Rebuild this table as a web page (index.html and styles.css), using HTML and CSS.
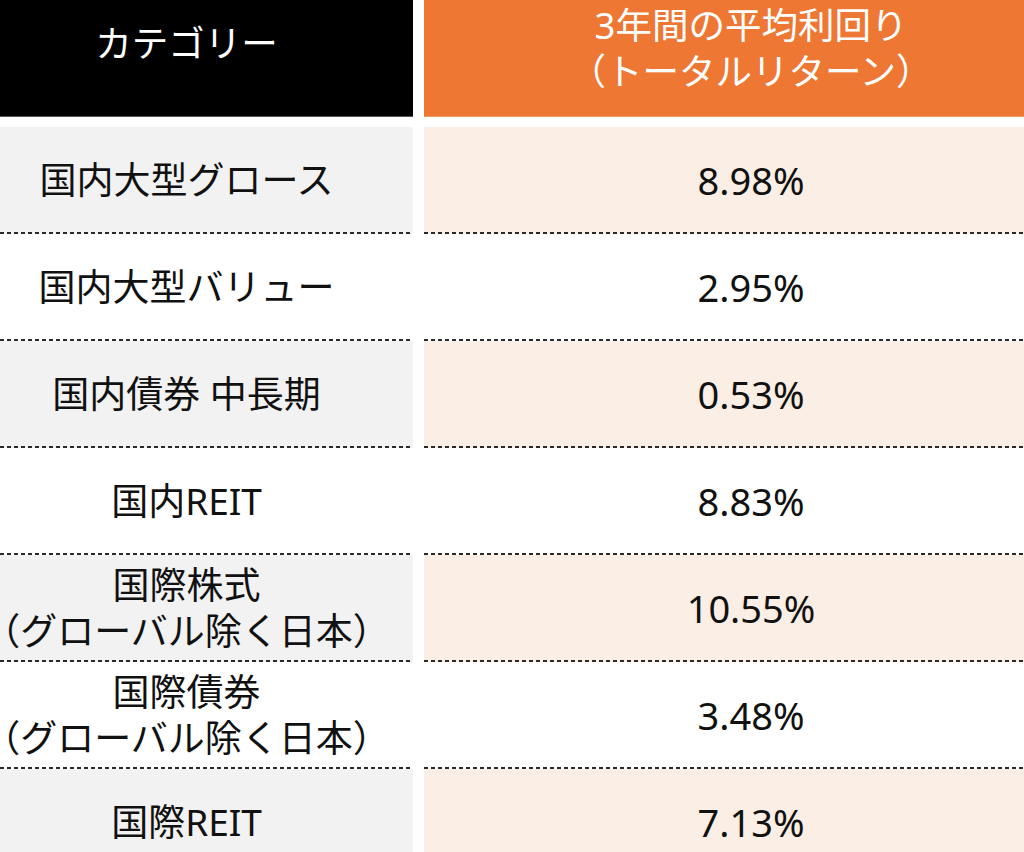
FILE: index.html
```html
<!DOCTYPE html>
<html lang="ja">
<head>
<meta charset="utf-8">
<link rel="stylesheet" href="styles.css">
</head>
<body>
<div class="table">
  <div class="head">
    <div class="hcell cat"><span>カテゴリー</span></div>
    <div class="hcell ret"><span>3年間の平均利回り<br>（トータルリターン）</span></div>
  </div>
  <div class="rows">
    <div class="row shade"><div class="cell left">国内大型グロース</div><div class="cell right">8.98%</div></div>
    <div class="row"><div class="cell left">国内大型バリュー</div><div class="cell right">2.95%</div></div>
    <div class="row shade"><div class="cell left">国内債券 中長期</div><div class="cell right">0.53%</div></div>
    <div class="row"><div class="cell left">国内REIT</div><div class="cell right">8.83%</div></div>
    <div class="row shade"><div class="cell left">国際株式<br>（グローバル除く日本）</div><div class="cell right">10.55%</div></div>
    <div class="row"><div class="cell left">国際債券<br>（グローバル除く日本）</div><div class="cell right">3.48%</div></div>
    <div class="row shade"><div class="cell left">国際REIT</div><div class="cell right">7.13%</div></div>
  </div>
</div>
</body>
</html>
```
FILE: styles.css
```css
html, body {
  margin: 0;
  padding: 0;
  background: #ffffff;
}
body {
  width: 1024px;
  height: 852px;
  overflow: hidden;
  font-family: "Noto Sans", "Noto Sans CJK JP", sans-serif;
  font-size: 37px;
  line-height: 46px;
  color: #111111;
}
.table {
  display: flex;
  flex-direction: column;
}
.head {
  display: grid;
  grid-template-columns: 413px 600px;
  column-gap: 11px;
  height: 116px;
}
.hcell {
  display: flex;
  align-items: center;
  justify-content: center;
  text-align: center;
  color: #ffffff;
  white-space: nowrap;
  font-size: 36.5px;
}
.cat {
  background: #000000;
  padding-right: 40px;
  padding-bottom: 30px;
  border-bottom: 1px solid #555555;
}
.ret {
  background: #ed7733;
  padding-left: 54px;
  padding-top: 2px;
  padding-bottom: 22px;
  border-bottom: 1px solid #f19a66;
}
.rows {
  margin-top: 11px;
  display: flex;
  flex-direction: column;
}
.row {
  display: grid;
  grid-template-columns: 413px 600px;
  column-gap: 11px;
  height: 107px;
}
.cell {
  display: flex;
  align-items: center;
  justify-content: center;
  text-align: center;
  white-space: nowrap;
  padding-bottom: 2px;
  background: repeating-linear-gradient(90deg, #2a2a2a 0 4px, transparent 4px 7px) left bottom / 100% 2px no-repeat, #ffffff;
}
.left {
  padding-right: 40px;
}
.right {
  padding-left: 54px;
  font-size: 38px;
}
.shade .left {
  background: repeating-linear-gradient(90deg, #2a2a2a 0 4px, transparent 4px 7px) left bottom / 100% 2px no-repeat, #f2f2f2;
}
.shade .right {
  background: repeating-linear-gradient(90deg, #2a2a2a 0 4px, transparent 4px 7px) left bottom / 100% 2px no-repeat, #fbefe5;
}
```
